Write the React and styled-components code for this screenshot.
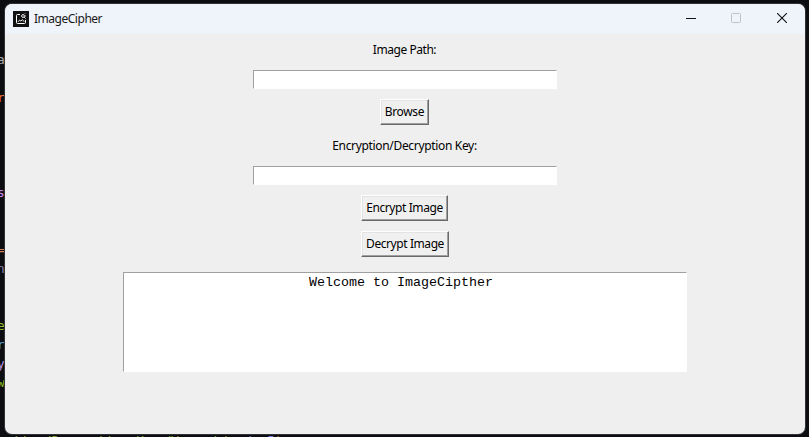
import React from "react";
import styled, { createGlobalStyle } from "styled-components";

const GlobalStyle = createGlobalStyle`
  * { box-sizing: border-box; }
  html, body { margin: 0; padding: 0; overflow: hidden; background: #0b0d11; }
`;

const Desktop = styled.main`
  position: relative;
  width: 809px;
  height: 437px;
  padding: 4px 4px 3px 5px;
  overflow: hidden;
  background: #0b0d11;
  font-family: "Noto Sans", sans-serif;
`;

const CodeFragment = styled.span`
  position: absolute;
  top: ${(p) => p.$y}px;
  left: ${(p) => p.$x}px;
  color: ${(p) => p.$color};
  font: 12.8px/16px "DejaVu Sans Mono", monospace;
  white-space: pre;
`;

const CodeToken = styled.span`
  color: ${(p) => p.$color};
`;

const Window = styled.section`
  position: relative;
  display: flex;
  flex-direction: column;
  width: 800px;
  height: 430px;
  overflow: hidden;
  border-radius: 7px;
  background: #efefef;
  box-shadow: 0 0 0 1px #303236;
`;

const TitleBar = styled.header`
  display: flex;
  align-items: center;
  height: 30px;
  padding-left: 8px;
  background: #eff3fa;
`;

const Title = styled.h1`
  flex: 1;
  margin: 0 0 0 5px;
  color: #191919;
  font-size: 12px;
  font-weight: 400;
  line-height: 16px;
  letter-spacing: -0.48px;
`;

const Controls = styled.div`
  display: flex;
  height: 30px;
`;

const ControlButton = styled.button`
  display: grid;
  place-items: center;
  width: 46px;
  height: 28px;
  padding: 0;
  border: 0;
  background: transparent;
  color: ${(p) => (p.disabled ? "#bfc2c7" : "#111")};
`;

const Form = styled.div`
  display: flex;
  flex-direction: column;
  align-items: center;
  padding: 5px 0 0;
`;

const Label = styled.label`
  height: 21px;
  margin: 0 1px 10px 0;
  color: #000;
  font-size: 12px;
  line-height: 22px;
  letter-spacing: ${(p) => p.$tracking}px;
  white-space: nowrap;
`;

const Entry = styled.input`
  width: 304px;
  height: 19px;
  margin: 0 0 10px;
  padding: 1px 3px;
  border: 1px solid;
  border-color: #a0a0a0 #fff #fff #a0a0a0;
  border-radius: 0;
  outline: 0;
  background: #fff;
`;

const Button = styled.button`
  width: ${(p) => p.$width}px;
  height: 26px;
  margin: 0 ${(p) => p.$width % 2}px 10px 0;
  padding: 0;
  border: 1px solid;
  border-color: #fff #696969 #696969 #fff;
  border-radius: 0;
  background: #f0f0f0;
  box-shadow: inset -1px -1px #a0a0a0, inset 1px 1px #e3e3e3;
  color: #000;
  font: 12px/20px "Noto Sans", sans-serif;
  letter-spacing: ${(p) => p.$tracking}px;
  white-space: nowrap;
`;

const Output = styled.div`
  width: 564px;
  height: 100px;
  margin-top: 5px;
  padding: 2px 8px 0 0;
  border: 1px solid;
  border-color: #a0a0a0 #fff #fff #a0a0a0;
  background: #fff;
  color: #000;
  font: 13.33px/16px "Courier New", "Liberation Mono", monospace;
  text-align: center;
`;

const code = [
  [-3, 52, "#aaa9a5", "a"], [-3, 90, "#e8763e", "r"],
  [-3, 185, "#c98bea", "s"], [-3, 242, "#d28060", "="],
  [-3, 261, "#8a7aa8", "n"], [-3, 318, "#8fbc2c", "e"],
  [-3, 337, "#4a96d0", "r"], [-3, 356, "#b090e4", "y"],
  [-3, 375, "#8abb1c", "w"],
];

const AppIcon = () => (
  <svg width="16" height="16" viewBox="0 0 16 16" fill="none" stroke="#fff">
    <rect width="16" height="16" fill="#111" stroke="none" />
    <path d="M7 3.5H4.5q-1 0-1 1v7q0 1 1 1h7q1 0 1-1V9" />
    <path d="M5 10.8 6.7 9l1.2 1.2L9.4 8.5l1.8 2.3" strokeWidth=".9" />
    <circle cx="10" cy="5" r="1.4" strokeWidth=".9" />
    <path d="m11 6 1.7 1.7M11.3 3.2l.8-.8M12 5h1" strokeWidth=".8" />
  </svg>
);

export default function App() {
  return (
    <>
      <GlobalStyle />
      <Desktop>
        {code.map(([x, y, color, text]) => (
          <CodeFragment key={y} $x={x} $y={y} $color={color}>{text}</CodeFragment>
        ))}
        <CodeFragment $x={13} $y={433} $color="#82a42c">
          {'tion/Decryption Key:"'}
          <CodeToken $color="#c0941c">)</CodeToken>
          {".pack"}
          <CodeToken $color="#c0941c">(</CodeToken>
          <CodeToken $color="#7a78d0">pady=5</CodeToken>
          <CodeToken $color="#c0941c">)</CodeToken>
        </CodeFragment>
        <Window>
          <TitleBar>
            <AppIcon />
            <Title>ImageCipher</Title>
            <Controls>
              <ControlButton aria-label="Minimize">
                <svg width="10" height="10" overflow="visible"><path d="M1 5.5h10" stroke="currentColor" /></svg>
              </ControlButton>
              <ControlButton aria-label="Maximize" disabled>
                <svg width="10" height="10"><rect x=".5" y=".5" width="9" height="9" rx="1" fill="none" stroke="currentColor" /></svg>
              </ControlButton>
              <ControlButton aria-label="Close">
                <svg width="10" height="10"><path d="m0 0 10 10M10 0 0 10" stroke="currentColor" strokeWidth="1.1" /></svg>
              </ControlButton>
            </Controls>
          </TitleBar>
          <Form>
            <Label htmlFor="path" $tracking={-0.45}>Image Path:</Label>
            <Entry id="path" />
            <Button $width={49} $tracking={-0.35}>Browse</Button>
            <Label htmlFor="key" $tracking={-0.33}>Encryption/Decryption Key:</Label>
            <Entry id="key" />
            <Button $width={87} $tracking={-0.4}>Encrypt Image</Button>
            <Button $width={88} $tracking={-0.42}>Decrypt Image</Button>
            <Output>Welcome to ImageCipther</Output>
          </Form>
        </Window>
      </Desktop>
    </>
  );
}
